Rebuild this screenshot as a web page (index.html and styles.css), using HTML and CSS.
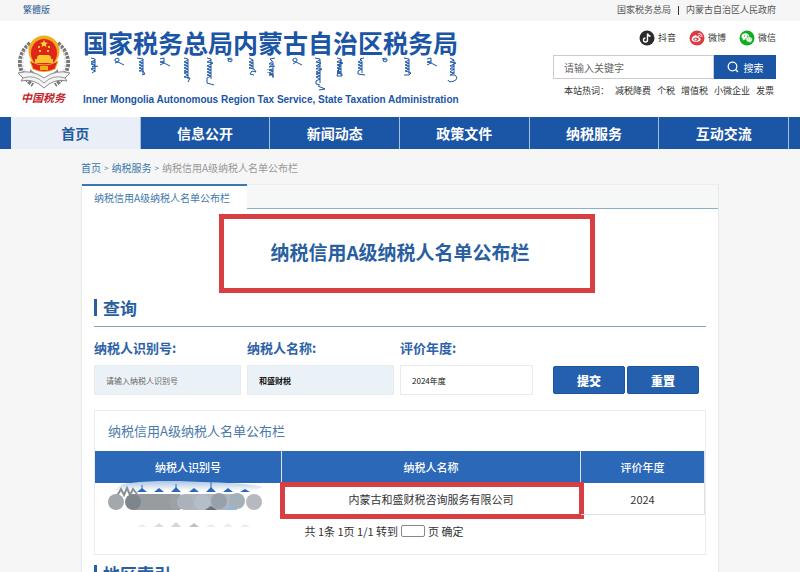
FILE: index.html
```
<!DOCTYPE html>
<html lang="zh-CN">

<head>
    <meta charset="UTF-8">
    <meta name="viewport" content="width=device-width, initial-scale=1.0">
    <title>纳税信用A级纳税人名单公布栏</title>
    <link rel="stylesheet" href="styles.css">
</head>

<body>
    <!-- 顶部条 -->
    <div class="topbar">
        <a href="#">繁體版</a>
        <div class="topbar-links">
            <a href="#">国家税务总局</a>
            <i class="line"></i>
            <a href="#">内蒙古自治区人民政府</a>
        </div>
    </div>
    <!-- 头部 -->
    <header class="header">
        <svg class="emblem" viewBox="0 0 52 72" width="52" height="72">
            <path d="M12 8Q1 18 2 30Q4 43 15 50M40 8Q51 18 50 30Q48 43 37 50" fill="none" stroke="#777" stroke-width="4" stroke-dasharray="3 1" />
            <path d="M11 12Q3 20 5 31Q8 42 16 46M41 12Q49 20 47 31Q44 42 36 46" fill="none" stroke="#ddd" stroke-width="2" stroke-dasharray="2 2" />
            <path d="M12 34l14 12 14-12v8l-14 8-14-8z" fill="#8a8a8a" />
            <circle cx="26" cy="16" r="15.500" fill="#f3ad1c" />
            <ellipse cx="26" cy="18" rx="13" ry="14" fill="#e0251b" />
            <path d="M12 26Q26 34 40 26L37 34Q26 39 15 34Z" fill="#e0251b" stroke="#f3ad1c" />
            <path d="M26 5l1.200 2.400 2.600.3-1.900 1.800.5 2.600L26 10.800l-2.400 1.300.5-2.600-1.900-1.800 2.600-.3z" fill="#ffd83a" />
            <path d="M20 11h2v2h-2zM30 11h2v2h-2zM21 15h2v2h-2zM29 15h2v2h-2zM19 22l2-2h10l2 2v2h2v4H17v-4h2z" fill="#fbc52c" />
            <path d="M22 31h8v4h-8z" fill="#f3ad1c" />
            <path d="M0 38Q14 34 26 43Q38 34 52 38L47 43L49 46Q36 43 26 53Q16 43 3 46L5 43Z" fill="#f4f4f4" stroke="#888" />
            <path d="M5 43Q17 39 26 48Q35 39 47 43" fill="none" stroke="#999" />
            <text class="emblem-text" x="3" y="67">中国税务</text>
        </svg>
        <div class="brand">
            <div class="brand-cn">国家税务总局内蒙古自治区税务局</div>
            <!-- 蒙文装饰 -->
            <svg class="brand-mn" viewBox="0 0 378 34" width="378" height="34">
                <path d="M8 1l4 1v13M12 3l-4 2 4 0-4 2 4 1-3 2 6-1M12 11l-4 1 4 2-3 2" />
                <path d="M32 2q4-2 4 1t-4 1zM32 6l3-1 6 3" />
                <path d="M54 1l6 1v15M60 3l-4 2 4 1-4 2 4 1-4 2 4 1-4 2 4 0 2 3-3 1" />
                <path d="M77 2l4-1v5l-4-1 4-1M77 8l4-2 6 3" />
                <path d="M101 1l4 1v20M105 3l-4 2 4 1-4 2 4 1-4 2 4 1-4 2 4 1-4 1 4 2-4 2 6 1-2 4" />
                <path d="M124 1l4 1v20M128 3l-4 2 6 1-6 3 4 1-4 2 4 1-4 2 4 1-4 2 4 1-4 2v5l7 2" />
                <path d="M144 2q5-2 5 1t-4 1l1-2 2 1" />
                <path d="M166 1l4 2v9M170 3l-4 2 4 1-4 2 4 1-4 2 5 1 2 3-4-1-2 3 4 1" />
                <path d="M192 1l-5 1 3 3v15M190 4l-4 3 4 0-4 3 6-1M190 12l-4 1 4 1-4 2 4 1-4 1 4 0v3M185 12v1M185 15v1" />
                <path d="M210 2q4-2 4 1t-4 1zM210 7l3-2 6 3" />
                <path d="M232 1l5 1v24M237 3l-4 2 5 1-5 3 4 0-4 3 6 0-6 3 4 1-4 1 4 2-4 1 4 2-4 2v3l4 1M235 29l7 3-6 1" />
                <path d="M254 1l4 1v16M258 3l-4 2 6 1-6 2 4 1-4 2 4 1-4 2 4 1-4 1 5 1v2h-5z" />
                <path d="M281 1l-4 1 2 2v12M279 3l-4 2 4 1-4 2 4 1-4 2 4 1-4 2v3l7 1" />
                <path d="M299 2q5-2 5 1t-4 1l1-2 2 1" />
                <path d="M321 1l5 1v15M326 3l-4 2 4 1-4 2 4 1-4 2 4 1-4 2 4 1 2 1-2 2-5 0" />
                <path d="M344 2l4-1v5l-4-1 4-1M344 8l4-2 6 3" />
                <path d="M367 1l4 2v14M371 3l-4 2 6 1-6 3 4 0-4 3 4 0-4 3 4 1-4 2 5 0q4 4-1 6t-6-1" />
            </svg>
            <div class="brand-en">Inner Mongolia Autonomous Region Tax Service, State Taxation Administration</div>
        </div>
        <div class="tools">
            <div class="social">
                <a href="#">
                    <svg viewBox="0 0 16 16" width="16" height="16">
                        <circle cx="8" cy="8" r="7.500" fill="#2b2b2e" />
                        <path d="M8.500 3.500v6.500a2 2 0 1 1-2-2M8.500 3.500q.5 2.500 3 2.800" fill="none" stroke="#fff" stroke-width="1.400" />
                    </svg>抖音</a>
                <a href="#">
                    <svg viewBox="0 0 16 16" width="16" height="16">
                        <circle cx="8" cy="8" r="7.500" fill="#d93c45" />
                        <path d="M7 5.200C5 5 2.700 7.500 2.700 9.200c0 3.500 8.800 3.500 9 0 0-1-.8-1.300-1.500-1.500.3-1.200-.7-1.700-2.300-1.100 0-.7 0-1.200-.9-1.400z" fill="#fff" />
                        <ellipse cx="7" cy="9.300" rx="2.800" ry="1.800" fill="#d93c45" />
                        <circle cx="6.600" cy="9.500" r="1.100" fill="#fff" />
                        <path d="M9.300 3.600q3.800-.4 3.700 3.400M9.500 5.300q1.900-.2 1.900 1.500" fill="none" stroke="#fff" stroke-width=".9" />
                    </svg>微博</a>
                <a href="#">
                    <svg viewBox="0 0 16 16" width="16" height="16">
                        <circle cx="8" cy="8" r="7.500" fill="#0fae1c" />
                        <path d="M3.500 10.500l.4-1.600A3.900 3.200 0 1 1 6 9.600z" fill="#fff" />
                        <path d="M12.400 12.800l-.2-1.200a3.200 2.700 0 1 0-1.700.6z" fill="#fff" stroke="#0fae1c" stroke-width=".6" />
                        <path d="M5 5.500h1v1H5zM8 5.500h1v1H8zM9 8.800h.8v.8H9zM11.200 8.800h.8v.8h-.8z" fill="#0fae1c" />
                    </svg>微信</a>
            </div>
            <form class="search">
                <input type="text" placeholder="请输入关键字" aria-label="请输入关键字">
                <button type="button">
                    <svg viewBox="0 0 12 12" width="12" height="12">
                        <circle cx="5.500" cy="5.500" r="4.300" />
                        <path d="M8.500 8.500l2.500 2.500" />
                    </svg>搜索</button>
            </form>
            <div class="hot">
                <span>本站热词：</span>
                <a href="#">减税降费</a>
                <a href="#">个税</a>
                <a href="#">增值税</a>
                <a href="#">小微企业</a>
                <a href="#">发票</a>
            </div>
        </div>
    </header>
    <!-- 导航 -->
    <nav class="nav">
        <a href="#" class="sel">首页</a>
        <a href="#">信息公开</a>
        <a href="#">新闻动态</a>
        <a href="#">政策文件</a>
        <a href="#">纳税服务</a>
        <a href="#">互动交流</a>
    </nav>
    <main class="main">
        <div class="crumbs">
            <a href="#">首页</a>
            <i>&gt;</i>
            <a href="#">纳税服务</a>
            <i>&gt;</i>
            <span>纳税信用A级纳税人名单公布栏</span>
        </div>
        <div class="panel">
            <div class="tabs">
                <a href="#" class="tab">纳税信用A级纳税人名单公布栏</a>
            </div>
            <div class="content">
                <h1 class="title">纳税信用A级纳税人名单公布栏</h1>
                <h2 class="caption">查询</h2>
                <form class="query">
                    <div class="field">
                        <label for="code">纳税人识别号:</label>
                        <input type="text" id="code" placeholder="请输入纳税人识别号">
                    </div>
                    <div class="field">
                        <label for="name">纳税人名称:</label>
                        <input type="text" id="name" class="strong" value="和盛财税">
                    </div>
                    <div class="field">
                        <label for="year">评价年度:</label>
                        <select id="year">
                            <option>2024年度</option>
                        </select>
                    </div>
                    <div class="actions">
                        <button type="button">提交</button>
                        <button type="button">重置</button>
                    </div>
                </form>
                <div class="result">
                    <h3>纳税信用A级纳税人名单公布栏</h3>
                    <table>
                        <thead>
                            <tr>
                                <th class="col-code">纳税人识别号</th>
                                <th class="col-name">纳税人名称</th>
                                <th>评价年度</th>
                            </tr>
                        </thead>
                        <tbody>
                            <tr>
                                <td class="masked">
                                    <!-- 识别号打码 -->
                                    <svg viewBox="0 0 170 48" width="170" height="48">
                                        <defs>
                                            <linearGradient id="fade" x1="0" y1="0" x2="0" y2="1">
                                                <stop offset="0" stop-color="#a9c4e2" />
                                                <stop offset="1" stop-color="#fff" />
                                            </linearGradient>
                                        </defs>
                                        <path d="M20 3Q50-2 100 1Q145 2 160 6L150 10H10Z" fill="url(#fade)" />
                                        <path d="M14 15l4-7 3 6 3-7 3 7 3-6 4 5" fill="none" stroke="#8b9093" stroke-width="2" />
                                        <path d="M34 11l5-4 5 4zM51 11l5-4 5 4zM68 11l5-5 5 5zM86 11l5-4 5 4zM103 11l5-5 5 5zM120 11l5-4 5 4zM137 11l5-3 5 3z" fill="#2b68b8" />
                                        <path d="M39 4v4M73 3v4M108 1v6" stroke="#2b68b8" />
                                        <path d="M30 13h47v16H30z" fill="#969c9f" />
                                        <path d="M82 13h52v16H82z" fill="#aeb6bf" />
                                        <circle cx="13" cy="21" r="8" fill="#a3a8ac" />
                                        <circle cx="30" cy="21" r="8" fill="#7e868d" />
                                        <circle cx="47" cy="21" r="8" fill="#969c9f" />
                                        <circle cx="74" cy="21" r="8" fill="#9ba1a5" />
                                        <circle cx="82" cy="21" r="8" fill="#abb2bb" />
                                        <circle cx="99" cy="21" r="8" fill="#b5bdc8" />
                                        <path d="M102 29l6-4 6 4z" fill="#66717d" />
                                        <circle cx="116" cy="20" r="8" fill="#98a1a9" />
                                        <circle cx="134" cy="20" r="8" fill="#a5b0bb" />
                                        <path d="M122 29l5-4 5 4z" fill="#8fb8e8" />
                                        <circle cx="151" cy="21" r="8" fill="#b6babf" />
                                        <path d="M51 46l5-4 5 4z" fill="#dadddd" />
                                        <path d="M68 46l5-5 5 5z" fill="#d0d5d5" />
                                        <path d="M86 46l5-4 5 4z" fill="#b9c3c6" />
                                        <path d="M34 46l5-3 5 3zM103 46l5-3 5 3zM120 46l5-4 5 4zM137 46l5-3 5 3z" fill="#eceeee" />
                                    </svg>
                                </td>
                                <td class="marked">内蒙古和盛财税咨询服务有限公司</td>
                                <td>2024</td>
                            </tr>
                        </tbody>
                    </table>
                    <div class="pager">
                        <label for="page">共 1条 1页 1/1 转到</label>
                        <input type="text" id="page">
                        <span>页 <a href="#">确定</a></span>
                    </div>
                </div>
                <h2 class="caption">地区索引</h2>
            </div>
        </div>
    </main>
</body>

</html>
```
FILE: styles.css
```
* {
    box-sizing: border-box;
}

body {
    margin: 0;
    height: 100vh;
    overflow: hidden;
    background: #f6f6f6;
    color: #333;
    font: 11px/20px "Noto Sans CJK SC", sans-serif;
}

a {
    color: inherit;
    text-decoration: none;
}

i {
    font-style: normal;
}

input,
select,
button {
    font-family: inherit;
    margin: 0;
}

h1,
h2,
h3 {
    margin: 0;
}

/* 顶部条 */
.topbar {
    display: flex;
    justify-content: space-between;
    padding: 0 24px 1px 23px;
    font-size: 9px;
    color: #555;
}

.topbar > a {
    color: #2c5f93;
}

.topbar-links {
    display: flex;
    align-items: center;
    gap: 7px;
}

.topbar .line {
    width: 1px;
    height: 9px;
    background: #333;
}

/* 头部 */
.header {
    display: flex;
    padding: 6px 24px 8px 18px;
    background: #fff;
    height: 96px;
}

.emblem {
    margin: 8px 13px 0 0;
}

.emblem-text {
    font-size: 11px;
    font-weight: bold;
    font-style: italic;
    fill: #c0272d;
}

.brand {
    color: #1b55a5;
}

.brand-cn {
    font-size: 25px;
    font-weight: bold;
    line-height: 30px;
}

.brand-mn {
    display: block;
    fill: none;
    stroke: #1b55a5;
}

.brand-en {
    margin-top: 1px;
    font: bold 10px/16px "Liberation Sans", sans-serif;
    white-space: nowrap;
}

.tools {
    width: 223px;
    margin-left: auto;
    padding-top: 2px;
    font-size: 9px;
}

.social {
    display: flex;
    justify-content: flex-end;
    gap: 13px;
    height: 18px;
}

.social a {
    display: flex;
    align-items: center;
    gap: 3px;
}

.search {
    display: flex;
    height: 24px;
    margin-top: 8px;
}

.search input {
    flex: 1;
    min-width: 0;
    padding: 0 10px;
    border: 1px solid #ccc;
    font-size: 10px;
}

.search input::placeholder {
    color: #666;
}

.search button {
    display: flex;
    align-items: center;
    justify-content: center;
    gap: 5px;
    width: 62px;
    padding: 0;
    border: 0;
    background: #1b55a5;
    color: #fff;
    font-size: 10px;
}

.search svg {
    fill: none;
    stroke: #fff;
    stroke-width: 1.3;
}

.hot {
    display: flex;
    justify-content: flex-end;
    gap: 6px;
    margin-top: 2px;
    padding-right: 2px;
}

/* 导航 */
.nav {
    display: grid;
    grid-template-columns: repeat(6, 1fr);
    padding: 0 11px;
    background: #1b55a5;
    color: #fff;
    font-size: 14px;
    font-weight: bold;
    line-height: 32px;
    text-align: center;
}

.nav a {
    border-right: 1px solid #a5bfe0;
}

.nav .sel {
    background: #e9eef7;
    color: #1f5c9e;
}

/* 主体 */
.main {
    padding: 0 81px;
}

.crumbs {
    display: flex;
    gap: 3px;
    padding: 11px 0 8px;
    font-size: 10px;
    line-height: 16px;
    color: #999;
}

.crumbs a,
.crumbs i {
    color: #3a76ae;
}

.crumbs i {
    font-size: 8px;
}

.panel {
    border: 1px solid #e6e8ea;
    border-top: 0;
    background: #fff;
}

.tabs {
    display: flex;
    background: #f6f7f7;
}

.tabs::after {
    content: "";
    flex: 1;
    border-top: 1px solid #eceeee;
    border-bottom: 1px solid #86b0cc;
}

.tab {
    min-width: 165px;
    padding: 0 12px;
    border-top: 2px solid #3a78b0;
    background: #fff;
    color: #3f78ad;
    font-size: 10px;
    line-height: 23px;
}

.content {
    padding: 29px 12px 0;
}

.title {
    position: relative;
    margin-bottom: 33px;
    color: #2a5f9f;
    font-size: 19px;
    line-height: 28px;
    text-align: center;
}

/* 红框标注 */
.title::after,
.marked::after {
    content: "";
    position: absolute;
    border: 5px solid #d83f42;
}

.title::after {
    inset: -24px 111px -27px 125px;
}

.marked::after {
    inset: -1px -4px -5px -2px;
}

.caption {
    padding-bottom: 9px;
    border-bottom: 1px solid #7fa3bf;
    color: #2a5f9f;
    font-size: 17px;
    line-height: 18px;
}

.caption::before {
    content: "";
    float: left;
    width: 3px;
    height: 17px;
    margin-right: 6px;
    background: #2a5f9f;
}

/* 查询表单 */
.query {
    display: grid;
    grid-template-columns: 147fr 147fr 133fr 167fr;
    gap: 6px;
    align-items: end;
    margin-top: 11px;
}

.field {
    display: grid;
    gap: 7px;
}

.field label {
    color: #2c62a8;
    font-size: 13px;
    font-weight: bold;
}

.field input,
.field select {
    width: 100%;
    height: 30px;
    padding: 0 11px;
    border: 1px solid #e6ebee;
    border-radius: 0;
    background: #ebf2f7;
    color: #111;
    font-size: 8px;
}

.field input::placeholder {
    color: #666;
}

.field .strong {
    font-weight: bold;
}

.field select {
    appearance: none;
    background: #fff;
}

.actions {
    display: flex;
    gap: 2px;
    padding: 0 7px 1px 14px;
}

.actions button {
    flex: 1;
    height: 28px;
    padding: 0;
    border: 1px solid #1b55a0;
    border-radius: 2px;
    background: #2460ad;
    color: #fff;
    font-size: 12px;
    font-weight: 900;
}

/* 查询结果 */
.result {
    margin: 15px 0 10px;
    padding-bottom: 13px;
    border: 1px solid #eaecee;
}

.result h3 {
    padding-left: 13px;
    color: #4b7aab;
    font-size: 13px;
    font-weight: normal;
    line-height: 40px;
}

.result table {
    width: 100%;
    table-layout: fixed;
    border-collapse: separate;
    border-spacing: 0;
    text-align: center;
}

.result th,
.result td {
    height: 32px;
    padding: 0;
    border-right: 1px solid #dfe3e6;
}

.result th {
    background: #2b68b8;
    color: #fff;
    font-weight: 500;
}

.result td {
    position: relative;
    border-bottom: 1px solid #dfe3e6;
}

.col-code {
    width: 187px;
}

.col-name {
    width: 299px;
}

.masked svg {
    position: absolute;
    top: -2px;
    left: 8px;
}

.result .masked {
    border-bottom-color: #fff;
}

.pager {
    display: flex;
    align-items: center;
    justify-content: center;
    gap: 3px;
    margin-top: 6px;
    padding-right: 32px;
}

.pager input {
    width: 24px;
    height: 12px;
    padding: 0 2px;
    border: 1px solid #888;
    border-radius: 2px;
    font-size: 9px;
}
```
